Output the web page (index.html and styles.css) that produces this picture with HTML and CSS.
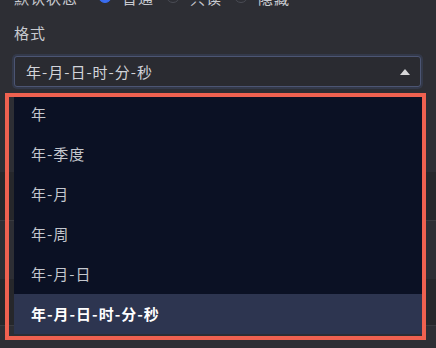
FILE: index.html
```html
<!DOCTYPE html>
<html lang="zh-CN">
<head>
    <meta charset="UTF-8">
    <title>格式</title>
    <link rel="stylesheet" href="styles.css">
</head>
<body>
    <div class="form">
        <div class="radio-row">
            <span class="field-name">默认状态</span>
            <span class="radio checked"></span><span class="radio-text">普通</span>
            <span class="radio"></span><span class="radio-text">只读</span>
            <span class="radio"></span><span class="radio-text">隐藏</span>
        </div>
        <div class="label">格式</div>
        <div class="select">
            <span class="select-value">年-月-日-时-分-秒</span>
            <span class="arrow"></span>
        </div>
    </div>

    <div class="bg-rows">
        <div class="bg-row dark"></div>
        <div class="bg-row line"></div>
        <div class="bg-row dark short"></div>
        <div class="bg-row line last"></div>
    </div>

    <ul class="dropdown">
        <li class="option">年</li>
        <li class="option">年-季度</li>
        <li class="option">年-月</li>
        <li class="option">年-周</li>
        <li class="option">年-月-日</li>
        <li class="option selected">年-月-日-时-分-秒</li>
    </ul>
    <div class="highlight"></div>
</body>
</html>
```

FILE: styles.css
```css
body {
    margin: 0;
    background-color: #2d2e34;
    font-family: "Noto Sans CJK SC", "Noto Sans", sans-serif;
    font-size: 15px;
    letter-spacing: 1px;
    color: #c8cad0;
    overflow: hidden;
}
.form {
    padding: 0 15px 0 14px;
    height: 184px;
}
.radio-row {
    display: flex;
    align-items: center;
    height: 20px;
    margin-top: -12px;
    line-height: 20px;
}
.field-name {
    width: 84px;
}
.radio {
    width: 12px;
    height: 12px;
    border: 1px solid #4a4c55;
    border-radius: 50%;
    margin-right: 10px;
    margin-top: -4px;
}
.radio.checked {
    background-color: #3a6df0;
    border-color: #3a6df0;
}
.radio-text {
    width: 38px;
    margin-right: 6px;
}
.label {
    margin-top: 15px;
    line-height: 20px;
}
.select {
    margin-top: 13px;
    height: 29px;
    border: 1px solid #4c5573;
    border-radius: 3px;
    box-shadow: 0 0 0 2px rgba(72, 90, 140, 0.25);
    background-color: #2a2b31;
    display: flex;
    align-items: center;
    padding: 0 10px 0 11px;
    color: #d2d4da;
}
.select-value {
    flex: 1;
}
.arrow {
    width: 0;
    height: 0;
    border-left: 5px solid transparent;
    border-right: 5px solid transparent;
    border-bottom: 6px solid #d6d6d8;
}
.bg-row {
    height: 48px;
}
.bg-row.dark {
    background-color: #26272b;
}
.bg-row.line {
    height: 58px;
    border-top: 1px solid #3a3b40;
}
.bg-row.short {
    height: 46px;
}
.bg-row.last {
    height: 10px;
}
.dropdown {
    position: absolute;
    left: 14px;
    top: 94px;
    width: 408px;
    margin: 0;
    padding: 0;
    list-style: none;
    background-color: #0b1124;
}
.option {
    height: 40px;
    line-height: 40px;
    padding-left: 17px;
    color: #c4c7ce;
}
.option.selected {
    background-color: #2d3550;
    color: #ffffff;
    font-weight: bold;
}
.highlight {
    position: absolute;
    left: 5px;
    top: 93px;
    width: 413px;
    height: 239px;
    border: 4px solid #ef6150;
}
```
